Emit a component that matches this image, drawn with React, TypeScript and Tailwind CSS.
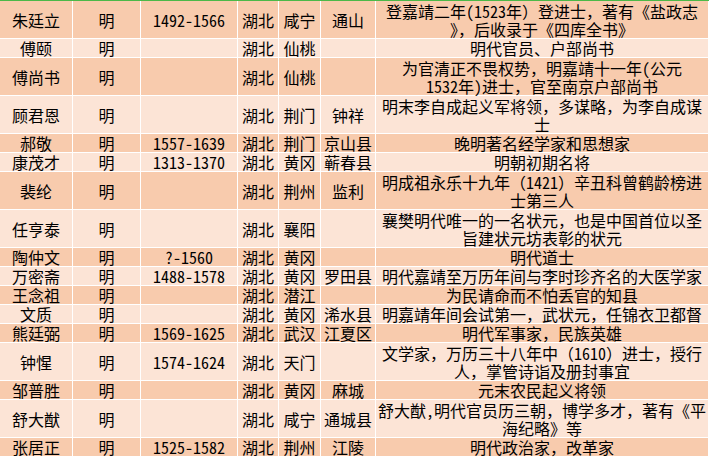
const rows: { name: string; dyn: string; years: string; prov: string; city: string; county: string; desc: string[]; tall?: boolean }[] = [
  { name: "朱廷立", dyn: "明", years: "1492-1566", prov: "湖北", city: "咸宁", county: "通山", desc: ["登嘉靖二年(1523年）登进士，著有《盐政志", "》，后收录于《四库全书》"], tall: true },
  { name: "傅颐", dyn: "明", years: "", prov: "湖北", city: "仙桃", county: "", desc: ["明代官员、户部尚书"] },
  { name: "傅尚书", dyn: "明", years: "", prov: "湖北", city: "仙桃", county: "", desc: ["为官清正不畏权势，明嘉靖十一年(公元", "1532年)进士，官至南京户部尚书"], tall: true },
  { name: "顾君恩", dyn: "明", years: "", prov: "湖北", city: "荆门", county: "钟祥", desc: ["明末李自成起义军将领，多谋略，为李自成谋", "士"], tall: true },
  { name: "郝敬", dyn: "明", years: "1557-1639", prov: "湖北", city: "荆门", county: "京山县", desc: ["晚明著名经学家和思想家"] },
  { name: "康茂才", dyn: "明", years: "1313-1370", prov: "湖北", city: "黄冈", county: "蕲春县", desc: ["明朝初期名将"] },
  { name: "裴纶", dyn: "明", years: "", prov: "湖北", city: "荆州", county: "监利", desc: ["明成祖永乐十九年（1421）辛丑科曾鹤龄榜进", "士第三人"], tall: true },
  { name: "任亨泰", dyn: "明", years: "", prov: "湖北", city: "襄阳", county: "", desc: ["襄樊明代唯一的一名状元，也是中国首位以圣", "旨建状元坊表彰的状元"], tall: true },
  { name: "陶仲文", dyn: "明", years: "?-1560", prov: "湖北", city: "黄冈", county: "", desc: ["明代道士"] },
  { name: "万密斋", dyn: "明", years: "1488-1578", prov: "湖北", city: "黄冈", county: "罗田县", desc: ["明代嘉靖至万历年间与李时珍齐名的大医学家"] },
  { name: "王念祖", dyn: "明", years: "", prov: "湖北", city: "潜江", county: "", desc: ["为民请命而不怕丢官的知县"] },
  { name: "文质", dyn: "明", years: "", prov: "湖北", city: "黄冈", county: "浠水县", desc: ["明嘉靖年间会试第一，武状元，任锦衣卫都督"] },
  { name: "熊廷弼", dyn: "明", years: "1569-1625", prov: "湖北", city: "武汉", county: "江夏区", desc: ["明代军事家，民族英雄"] },
  { name: "钟惺", dyn: "明", years: "1574-1624", prov: "湖北", city: "天门", county: "", desc: ["文学家，万历三十八年中（1610）进士，授行", "人，掌管诗诣及册封事宜"], tall: true },
  { name: "邹普胜", dyn: "明", years: "", prov: "湖北", city: "黄冈", county: "麻城", desc: ["元末农民起义将领"] },
  { name: "舒大猷", dyn: "明", years: "", prov: "湖北", city: "咸宁", county: "通城县", desc: ["舒大猷,明代官员历三朝，博学多才，著有《平", "海纪略》等"], tall: true },
  { name: "张居正", dyn: "明", years: "1525-1582", prov: "湖北", city: "荆州", county: "江陵", desc: ["明代政治家，改革家"] },
];

function Cell({ children, bg }: { children?: React.ReactNode; bg: string }) {
  return <div className={`${bg} flex flex-col items-center justify-center whitespace-nowrap`}>{children}</div>;
}

export default function App() {
  return (
    <div
      className="w-[711px] h-[458px] bg-white text-black text-[16px] leading-[18px] overflow-hidden"
      style={{ fontFamily: '"Noto Sans Mono CJK SC", "Noto Sans CJK SC", sans-serif' }}
    >
      <div className="w-[709px] h-px bg-[#4cb848]" />
      <div className="w-[708px] flex flex-col gap-px bg-white">
        {rows.map((r, i) => {
          const bg = i % 2 === 0 ? "bg-[#f8cbad]" : "bg-[#fce4d6]";
          const h = r.tall ? "h-[37px]" : "h-[18px]";
          return (
            <div key={i} className={`grid grid-cols-[72px_67px_96px_40px_41px_54px_332px] gap-px ${h}`}>
              <Cell bg={bg}>{r.name}</Cell>
              <Cell bg={bg}>{r.dyn}</Cell>
              <Cell bg={bg}>{r.years}</Cell>
              <Cell bg={bg}>{r.prov}</Cell>
              <Cell bg={bg}>{r.city}</Cell>
              <Cell bg={bg}>{r.county}</Cell>
              <Cell bg={bg}>
                {r.desc.map((line, j) => (
                  <span key={j}>{line}</span>
                ))}
              </Cell>
            </div>
          );
        })}
      </div>
    </div>
  );
}
